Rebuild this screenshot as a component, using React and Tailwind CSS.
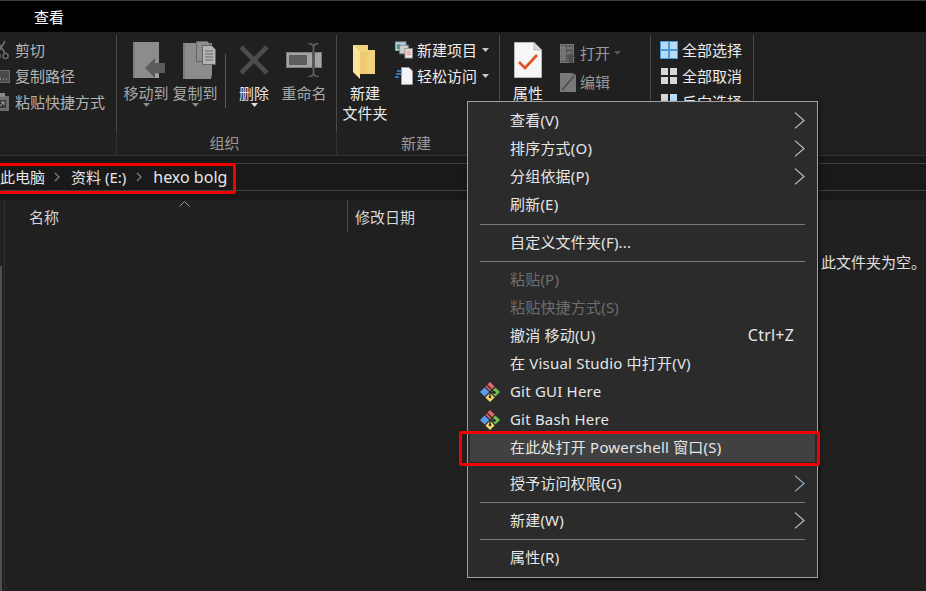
// explorer window with right-click menu
const ArrowCaret = ({ color = "#8a8a8a" }) => (
	<svg width="7" height="4" viewBox="0 0 7 4" className="block">
		<path d="M0 0h7L3.5 4z" fill={color} />
	</svg>
);

const Chevron = ({ color = "#c8c8c8" }) => (
	<svg width="11" height="17" viewBox="0 0 11 17" className="block">
		<path d="M1 .7 10 8.5 1 16.3" fill="none" stroke={color} strokeWidth="1.1" />
	</svg>
);

const PathChevron = () => (
	<svg width="6" height="10" viewBox="0 0 6 10" className="block">
		<path d="M1 1l4 4-4 4" fill="none" stroke="#7a7a7a" strokeWidth="1.4" />
	</svg>
);

const Scissors = () => (
	<svg width="16" height="20" viewBox="0 0 16 20" className="block">
		<path d="M3 1l8 12M11 1L4 13" stroke="#6e6e6e" strokeWidth="1.6" fill="none" />
		<circle cx="3.5" cy="16" r="2.6" stroke="#6e6e6e" strokeWidth="1.4" fill="none" />
		<circle cx="11.5" cy="16" r="2.6" stroke="#6e6e6e" strokeWidth="1.4" fill="none" />
	</svg>
);

const CopyPath = () => (
	<svg width="16" height="13" viewBox="0 0 16 13" className="block">
		<rect x="0" y="0" width="16" height="13" fill="#4a4a4a" stroke="#8a8a8a" />
		<path d="M2 9h2M6 9h1M9 9h1M12 9h1M3 5h3" stroke="#b8b8b8" />
	</svg>
);

const PasteShortcut = () => (
	<svg width="16" height="18" viewBox="0 0 16 18" className="block">
		<rect x="1" y="3" width="14" height="15" fill="#6e6e6e" />
		<rect x="5" y="0" width="6" height="4" fill="#8a8a8a" />
		<rect x="4" y="7" width="8" height="8" fill="#3a3a3a" />
		<path d="M6 13l4-4M7 9h3v3" stroke="#a8a8a8" fill="none" />
	</svg>
);

const MoveTo = () => (
	<svg width="33" height="36" viewBox="0 0 33 36" className="block">
		<rect x="0" y="0" width="26" height="36" fill="#8c8c8c" />
		<rect x="0" y="0" width="2" height="36" fill="#7c7c7c" />
		<path d="M12 26l10-10v5h10v10H22v5z" fill="#5c5c5c" />
		<rect x="22" y="32" width="4" height="4" fill="#a4a4a4" />
	</svg>
);

const CopyTo = () => (
	<svg width="33" height="38" viewBox="0 0 33 38" className="block">
		<path d="M0 2h29v31l-1 5H0z" fill="#8c8c8c" />
		<rect x="0" y="2" width="2" height="36" fill="#7c7c7c" />
		<path d="M13.5.5h11l4 4v16h-15z" fill="#8e8e8e" stroke="#666666" />
		<path d="M19.5 4.5h9l4 4v15h-13z" fill="#b4b4b4" stroke="#666666" />
		<path d="M22 10h8M22 13h8M22 16h8M22 19h8" stroke="#666666" />
	</svg>
);

const DeleteX = () => (
	<svg width="30" height="30" viewBox="0 0 30 30" className="block">
		<path d="M2 2l26 26M28 2L2 28" stroke="#4c4c4c" strokeWidth="4.6" />
	</svg>
);

const Rename = () => (
	<svg width="36" height="34" viewBox="0 0 36 34" className="block">
		<rect x="0.5" y="9.5" width="35" height="15" fill="#a4a4a4" stroke="#7c7c7c" />
		<rect x="3" y="12" width="18" height="10" fill="#5e5e5e" />
		<rect x="26" y="9" width="3" height="16" fill="#565656" />
		<path d="M27.5 3v28M22 0c2 0 4 1 5.5 3C29 1 31 0 33 0M22 34c2 0 4-1 5.5-3 1.5 2 3.5 3 5.5 3" stroke="#5a5a5a" strokeWidth="2" fill="none" />
	</svg>
);

const Folder = () => (
	<svg width="24" height="35" viewBox="0 0 24 35" className="block">
		<path d="M1 1h15v5h7v24H8z" fill="#f2d27a" />
		<path d="M1 1l7 7v27l-7-7z" fill="#fbe39a" />
		<path d="M8 8l7 0v22H8z" fill="#eecb6e" />
	</svg>
);

const NewItem = () => (
	<svg width="19" height="18" viewBox="0 0 19 18" className="block">
		<rect x="0.5" y="0.5" width="11" height="9" fill="#a8d4f0" stroke="#9a9a9a" />
		<rect x="2" y="3" width="4" height="5" fill="#5c8a6a" />
		<rect x="5" y="4" width="9" height="9" fill="#cfcfcf" stroke="#8a8a8a" />
		<rect x="10.5" y="7.5" width="8" height="10" fill="#f0f0f0" stroke="#8a8a8a" />
		<path d="M12 10h5M12 12h5M12 14h5" stroke="#d98a7a" />
	</svg>
);

const EasyAccess = () => (
	<svg width="18" height="18" viewBox="0 0 18 18" className="block">
		<path d="M6.5.5H14l3.5 3.5v13.5h-11z" fill="#f4f4f4" stroke="#9a9a9a" />
		<path d="M2 4h5M1 7h5M0 10h4" stroke="#3f8fd8" strokeWidth="1.3" />
	</svg>
);

const Properties = () => (
	<svg width="28" height="36" viewBox="0 0 28 36" className="block">
		<path d="M.5.5H20L27.5 8v27.5H.5z" fill="#f6f6f6" stroke="#b8b8b8" />
		<path d="M20 .5V8h7.5" fill="#d8d8d8" stroke="#b8b8b8" />
		<path d="M5 20l6 6L23 13" fill="none" stroke="#e2531f" strokeWidth="2.6" />
	</svg>
);

const OpenIcon = () => (
	<svg width="16" height="19" viewBox="0 0 16 19" className="block">
		<rect x="0.5" y="0.5" width="13" height="18" fill="#5c5c5c" stroke="#7a7a7a" />
		<path d="M2 3h3v3H2zM2 8h3v3H2zM2 13h3v3H2zM7 4h5M7 9h5" stroke="#8e8e8e" fill="none" />
		<path d="M11 9l5 5h-3v5H9v-5H6z" fill="#4e4e4e" />
	</svg>
);

const EditIcon = () => (
	<svg width="16" height="19" viewBox="0 0 16 19" className="block">
		<path d="M0 0h12l4 2v17H0z" fill="#787878" />
		<path d="M2 17 14 3" stroke="#4c4c4c" strokeWidth="1.6" />
	</svg>
);

const SelectGrid = ({ cells, frame }) => (
	<svg width="18" height="18" viewBox="0 0 18 18" className="block">
		{frame && <rect width="18" height="18" fill={frame} />}
		{cells.map((fill, i) => (
			<rect key={i} x={i % 2 === 0 ? 1 : 10} y={i < 2 ? 1 : 10} width="7" height="7" fill={fill} />
		))}
	</svg>
);

const GitIcon = () => (
	<svg width="20" height="20" viewBox="0 0 20 20" className="block">
		<path d="M10 0l4.6 4.6L10 9.2 5.4 4.6z" fill="#e8636a" />
		<path d="M4.6 5.4 9.2 10l-4.6 4.6L0 10z" fill="#5b9bf0" />
		<path d="M15.4 5.4 20 10l-4.6 4.6L10.8 10z" fill="#6cc24f" />
		<path d="M10 10.8l4.6 4.6L10 20l-4.6-4.6z" fill="#f4d56a" />
		<path d="M6 2l9 9M10 10v5M10 10l5 1" stroke="#2b2b2b" strokeWidth="1.3" fill="none" />
		<circle cx="10" cy="15" r="1.3" fill="#2b2b2b" />
		<circle cx="14.5" cy="10.5" r="1.3" fill="#2b2b2b" />
	</svg>
);

const BigButton = ({ icon, label, caret, color = "text-[#a8a8a8]", caretColor, width = "w-[50px]", iconShift = "" }) => (
	<div className={`flex flex-col items-center ${width}`}>
		<div className={`h-[40px] flex items-center justify-center ${iconShift}`}>{icon}</div>
		<p className={`${styles.ribbon_text} ${color} mt-[3px] whitespace-nowrap`}>{label}</p>
		{caret && <ArrowCaret color={caretColor} />}
	</div>
);

const SmallButton = ({ icon, label, color = "text-[#ededed]", caret }) => (
	<div className="flex items-center h-[26px] gap-[4px]">
		<div className="w-[18px] flex justify-center">{icon}</div>
		<p className={`${styles.ribbon_text} ${color} whitespace-nowrap`}>{label}</p>
		{caret}
	</div>
);

const Group = ({ label, width, children }) => (
	<div className={`flex flex-col shrink-0 ${width}`}>
		<div className="h-[97px] border-r border-[#4a4a4a] mt-[3px]">{children}</div>
		<div className="flex-1 border-r border-[#303030] flex items-center justify-center pr-[4px]">
			{label && <p className={`${styles.ribbon_text} text-[#9a9a9a] pb-[2px]`}>{label}</p>}
		</div>
	</div>
);

const MenuRow = ({ label, right, chevron, icon, disabled, active }) => (
	<div className={`${styles.menu_row} ${active ? "bg-[#414141]" : ""}`}>
		{icon && <div className="absolute left-[10px] top-[4px]">{icon}</div>}
		<p className={`ml-[40px] pb-[2px] ${disabled ? "text-[#6e6e6e]" : "text-[#e6e6e6]"}`}>{label}</p>
		{right && <p className="ml-auto mr-[21px] pb-[2px] text-[16px] text-[#e6e6e6]">{right}</p>}
		{chevron && (
			<div className="ml-auto mr-[10px] pb-[2px]">
				<Chevron color={chevron} />
			</div>
		)}
	</div>
);

const Sep = ({ height = "h-[9px]" }) => (
	<div className={`${height} flex items-center mx-[12px]`}>
		<div className="h-px w-full bg-[#7a7a7a]" />
	</div>
);

const App = () => {
	return (
		<div className={styles.page}>
			<div className="h-px bg-[#3e3e3e]" />

			{/* tabs */}
			<div className="h-[31px] bg-black pl-[34px] flex items-center">
				<p className="text-[15px] leading-[20px] text-white">查看</p>
			</div>

			{/* ribbon */}
			<div className="h-[124px] flex border-b border-[#333333]">
				<Group label="" width="w-[117px]">
					<div className="pt-[2px] -ml-[7px]">
						<SmallButton icon={<Scissors />} label="剪切" color="text-[#b4b4b4]" />
						<SmallButton icon={<CopyPath />} label="复制路径" color="text-[#b4b4b4]" />
						<SmallButton icon={<PasteShortcut />} label="粘贴快捷方式" color="text-[#b4b4b4]" />
					</div>
				</Group>
				<Group label="组织" width="w-[220px]">
					<div className="flex pt-[5px] pl-[4px]">
						<BigButton icon={<MoveTo />} label="移动到" caret iconShift="ml-[6px]" />
						<div className="-ml-[1px]">
							<BigButton icon={<CopyTo />} label="复制到" caret iconShift="ml-[9px]" />
						</div>
						<div className="w-px h-[54px] mt-[14px] bg-[#5a5a5a] ml-[5px] mr-[3px]" />
						<BigButton icon={<DeleteX />} label="删除" caret caretColor="#e0e0e0" color="text-[#e6e6e6]" />
						<BigButton icon={<Rename />} label="重命名" />
					</div>
				</Group>
				<Group label="新建" width="w-[163px]">
					<div className="flex pt-[2px]">
						<div className="flex flex-col items-center w-[56px]">
							<div className="h-[44px] pt-[7px] -ml-[2px]">
								<Folder />
							</div>
							<p className={`${styles.ribbon_text} text-[#ededed] mt-[2px]`}>新建</p>
							<p className={`${styles.ribbon_text} text-[#ededed]`}>文件夹</p>
						</div>
						<div className="ml-[2px]">
							<SmallButton
								icon={<NewItem />}
								label="新建项目"
								caret={
									<div className="ml-[1px]">
										<ArrowCaret color="#c8c8c8" />
									</div>
								}
							/>
							<SmallButton
								icon={<EasyAccess />}
								label="轻松访问"
								caret={
									<div className="ml-[1px]">
										<ArrowCaret color="#c8c8c8" />
									</div>
								}
							/>
						</div>
					</div>
				</Group>
				<Group label="" width="w-[151px]">
					<div className="flex pt-[5px] pl-[8px]">
						<BigButton icon={<Properties />} label="属性" color="text-[#ededed]" width="w-[40px]" />
						<div className="ml-[12px]">
							<div className="flex items-center h-[26px]">
								<OpenIcon />
								<p className={`${styles.ribbon_text} text-[#9a9a9a] ml-[4px]`}>打开</p>
								<div className="ml-[4px]">
									<ArrowCaret color="#555555" />
								</div>
							</div>
							<div className="flex items-center h-[32px]">
								<EditIcon />
								<p className={`${styles.ribbon_text} text-[#9a9a9a] ml-[4px]`}>编辑</p>
							</div>
						</div>
					</div>
				</Group>
				<Group label="" width="w-[103px]">
					<div className="pt-[2px] pl-[9px]">
						<SmallButton
							icon={<SelectGrid frame="#4a9ae0" cells={["#b8dcf8", "#b8dcf8", "#b8dcf8", "#b8dcf8"]} />}
							label="全部选择"
						/>
						<SmallButton icon={<SelectGrid cells={["#d8d8d8", "#d8d8d8", "#d8d8d8", "#d8d8d8"]} />} label="全部取消" />
						<SmallButton icon={<SelectGrid cells={["#d8d8d8", "#b8dcf8", "#b8dcf8", "#d8d8d8"]} />} label="反向选择" />
					</div>
				</Group>
			</div>

			{/* address bar */}
			<div className="h-[44px] bg-[#191919] pt-[7px]">
				<div className="h-[28px] border-y border-[#404040] flex items-center text-[15px] text-[#e6e6e6]">
					<p>此电脑</p>
					<div className="ml-[9px] mr-[11px]">
						<PathChevron />
					</div>
					<p>资料 (E:)</p>
					<div className="ml-[10px] mr-[11px]">
						<PathChevron />
					</div>
					<p className="text-[16px]">hexo bolg</p>
				</div>
			</div>

			{/* file list */}
			<div className="h-[390px] flex">
				<div className="w-[5px] border-r border-[#2e2e2e]">
					<div className="h-[66px]" />
					<div className="h-full w-[2px] bg-[#4e4e4e]" />
				</div>
				<div className="flex-1 relative">
					<div className="flex h-[32px] items-center text-[15px] text-[#d6d6d6]">
						<div className="w-[343px] h-full border-r border-[#4a4a4a] pl-[24px] flex items-center pt-[2px]">
							<p>名称</p>
						</div>
						<p className="ml-[7px] pt-[2px]">修改日期</p>
					</div>
					<svg width="11" height="6" viewBox="0 0 11 6" className="absolute left-[174px] top-[1px]">
						<path d="M.5 5.5l5-5 5 5" fill="none" stroke="#9a9a9a" />
					</svg>
					<p className="absolute left-[816px] top-[52px] text-[15px] leading-[20px] text-[#e0e0e0] whitespace-nowrap">
						此文件夹为空。
					</p>
				</div>
			</div>

			{/* context menu */}
			<div className={styles.menu}>
				<div className="h-[5px]" />
				<MenuRow label="查看(V)" chevron="#c8c8c8" />
				<MenuRow label="排序方式(O)" chevron="#c8c8c8" />
				<MenuRow label="分组依据(P)" chevron="#c8c8c8" />
				<MenuRow label="刷新(E)" />
				<Sep height="h-[10px]" />
				<MenuRow label="自定义文件夹(F)..." />
				<Sep />
				<MenuRow label="粘贴(P)" disabled />
				<MenuRow label="粘贴快捷方式(S)" disabled />
				<MenuRow label="撤消 移动(U)" right="Ctrl+Z" />
				<MenuRow label="在 Visual Studio 中打开(V)" />
				<MenuRow label="Git GUI Here" icon={<GitIcon />} />
				<MenuRow label="Git Bash Here" icon={<GitIcon />} />
				<MenuRow label="在此处打开 Powershell 窗口(S)" active />
				<div className="h-[8px]" />
				<MenuRow label="授予访问权限(G)" chevron="#9ab8d0" />
				<Sep />
				<MenuRow label="新建(W)" chevron="#c8c8c8" />
				<Sep />
				<MenuRow label="属性(R)" />
			</div>

			{/* red annotations */}
			<div className="absolute left-[-6px] top-[163px] w-[242px] h-[31px] border-[3px] border-[#f00000] rounded-[2px]" />
			<div className="absolute left-[459px] top-[431px] w-[361px] h-[35px] border-[3px] border-[#f00000] rounded-[2px]" />
		</div>
	);
};

const styles = {
	page: "relative w-[926px] h-[591px] overflow-hidden bg-[#202020] font-['Noto_Sans','Noto_Sans_CJK_SC',sans-serif]",
	ribbon_text: "text-[15px] leading-[20px]",
	menu: "absolute left-[467px] top-[101px] w-[351px] h-[477px] bg-[#2b2b2b] border border-[#a0a0a0] shadow-[2px_2px_4px_rgba(0,0,0,0.5)]",
	menu_row: "relative flex items-center h-[28px] mx-[2px] text-[15px] leading-[20px] tracking-[0.2px] whitespace-nowrap",
};

export default App;
